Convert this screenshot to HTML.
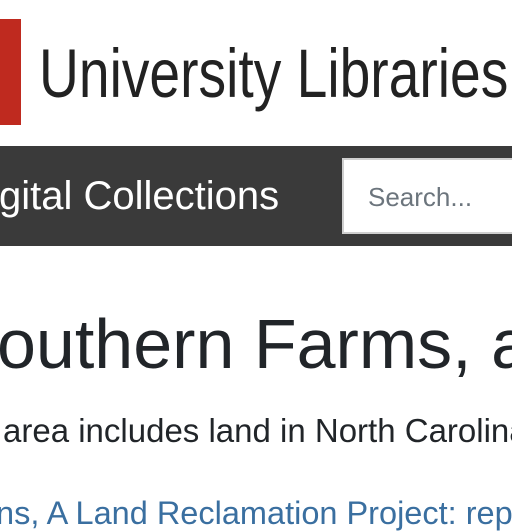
<!DOCTYPE html>
<html><head><meta charset="utf-8"><style>
html,body{margin:0;padding:0;width:512px;height:512px;overflow:hidden;background:#fff;font-family:"Liberation Sans",sans-serif}
.a{position:absolute;white-space:nowrap}
</style></head><body>
<div class="a" style="left:0;top:19px;width:21px;height:106px;background:#bf2a1f"></div>
<div class="a" style="left:39px;top:30px;font-size:69px;line-height:88px;color:#222;transform:scaleX(0.80);transform-origin:0 0">University Libraries</div>
<div class="a" style="left:0;top:146px;width:512px;height:100px;background:#3a3a3a"></div>
<div class="a" style="left:-1px;top:173px;font-size:40px;line-height:46px;color:#fff">gital Collections</div>
<div class="a" style="left:342px;top:158px;width:175px;height:72px;background:#fff;border:2px solid #cfcfcf"></div>
<div class="a" style="left:368px;top:182px;font-size:26px;line-height:30px;color:#6c757d">Search...</div>
<div class="a" style="left:-3px;top:300px;font-size:70px;line-height:88px;color:#212529">outhern Farms, a</div>
<div class="a" style="left:3px;top:412px;font-size:33px;line-height:38px;color:#212529">area includes land in North Carolina</div>
<div class="a" style="left:-4px;top:494px;font-size:32.5px;line-height:38px;color:#3a6fa0">ns, A Land Reclamation Project: rep</div>
</body></html>
